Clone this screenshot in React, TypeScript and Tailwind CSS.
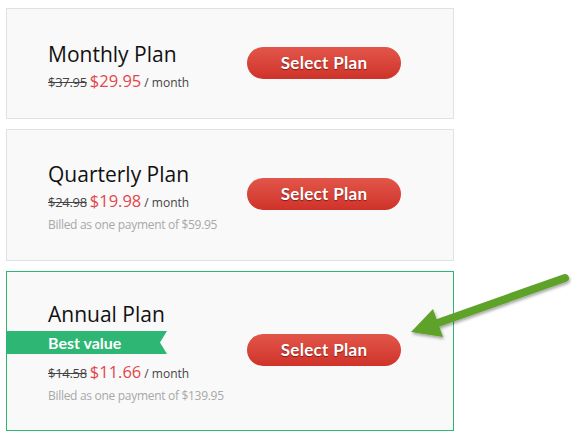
type Plan = {
  name: string;
  oldPrice: string;
  price: string;
  billed?: string;
  best?: boolean;
  height: string;
  top: string;
};

const plans: Plan[] = [
  { name: 'Monthly Plan', oldPrice: '$37.95', price: '$29.95', height: 'h-[111px]', top: 'pt-[32px]' },
  { name: 'Quarterly Plan', oldPrice: '$24.98', price: '$19.98', billed: 'Billed as one payment of $59.95', height: 'h-[132px]', top: 'pt-[31px]' },
  { name: 'Annual Plan', oldPrice: '$14.58', price: '$11.66', billed: 'Billed as one payment of $139.95', best: true, height: 'h-[160px]', top: 'pt-[29px]' },
];

function PlanCard({ plan }: { plan: Plan }) {
  return (
    <div
      className={`${plan.height} flex bg-[#f9f9f9] border ${
        plan.best ? 'border-[#2db674]' : 'border-[#e1e1e1]'
      } pl-[41px]`}
    >
      <div className={`w-[199px] flex flex-col ${plan.top}`}>
        <h3 className="text-[21px] leading-[26px] text-[#111] font-['Open_Sans',sans-serif]">{plan.name}</h3>
        {plan.best ? (
          <div className="-ml-[42px] w-[161px] h-[23px] mt-[4px] mb-[4px] pl-[42px] bg-[#2db674] text-white text-[16px] font-bold leading-[23px] font-['Lato',sans-serif] [clip-path:polygon(0_0,100%_0,calc(100%-7px)_50%,100%_100%,0_100%)]">
            Best value
          </div>
        ) : null}
        <div className="flex items-baseline gap-[3px] mt-[2px] font-['Open_Sans',sans-serif]">
          <span className="text-[13px] text-[#444] line-through tracking-[-0.3px]">{plan.oldPrice}</span>
          <span className="text-[16.5px] text-[#e2474b]">{plan.price}</span>
          <span className="text-[12px] text-[#444]">/ month</span>
        </div>
        {plan.billed ? (
          <p className="text-[12px] text-[#a8a8a8] mt-[2px] font-['Open_Sans',sans-serif] tracking-[-0.3px]">{plan.billed}</p>
        ) : null}
      </div>
      <button
        type="button"
        className="self-center -mt-[2px] w-[154px] h-[32px] rounded-full bg-gradient-to-b from-[#e2554a] to-[#cf3229] text-white text-[17px] tracking-[0.3px] font-bold font-['Lato',sans-serif] [text-shadow:0_1px_1px_rgba(80,0,0,0.6)]"
      >
        Select Plan
      </button>
    </div>
  );
}

export default function App() {
  return (
    <div className="relative w-[577px] h-[439px] bg-white overflow-hidden">
      <div className="ml-[6px] pt-[8px] w-[448px] flex flex-col gap-[10px]">
        {plans.map((plan) => (
          <PlanCard key={plan.name} plan={plan} />
        ))}
      </div>
      <svg className="absolute left-0 top-0" width="577" height="439" viewBox="0 0 577 439">
        <defs>
          <filter id="sh" x="-20%" y="-20%" width="140%" height="140%">
            <feDropShadow dx="1" dy="2" stdDeviation="1.5" floodColor="#000" floodOpacity="0.35" />
          </filter>
        </defs>
        <g filter="url(#sh)">
          <line x1="565" y1="278" x2="432" y2="325" stroke="#5fa22a" strokeWidth="8" strokeLinecap="round" />
          <polygon points="411,332 433,309 443,337" fill="#5fa22a" />
        </g>
      </svg>
    </div>
  );
}
